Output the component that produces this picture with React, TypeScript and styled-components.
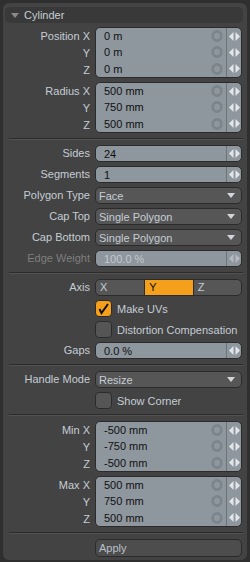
import styled, { createGlobalStyle } from 'styled-components'

const GlobalStyle = createGlobalStyle`
  html, body {
    margin: 0;
    padding: 0;
    background: #2f2f2f;
    overflow: hidden;
  }
  body {
    font-family: 'Liberation Sans', Arial, sans-serif;
    font-size: 11px;
  }
`

const Panel = styled.div`
  margin: 3px;
  background: #434343;
  border-radius: 6px;
  padding: 4px 5px 3px 0;
  display: flex;
  flex-direction: column;
  gap: 4px;
`

const Header = styled.div`
  height: 16px;
  margin: 0 -1px 0 2px;
  background: #393939;
  border-radius: 5px;
  display: flex;
  align-items: center;
  gap: 5px;
  padding-left: 6px;
  color: #c5cdd5;
`

const Row = styled.div`
  display: grid;
  grid-template-columns: 87px 1fr;
  column-gap: 5px;
  align-items: center;
  min-height: 17px;
`

const Label = styled.div<{ $disabled?: boolean }>`
  text-align: right;
  white-space: nowrap;
  line-height: 17px;
  color: ${({ $disabled }) => ($disabled ? '#7e7e7e' : '#c5cdd5')};
`

const LabelStack = styled.div`
  display: grid;
  grid-template-rows: repeat(3, 1fr);
  height: 51px;
  padding: 1px 0;
  box-sizing: border-box;
  align-items: center;
`

const ValueBox = styled.div<{ $rows: number }>`
  height: ${({ $rows }) => $rows * 17}px;
  box-sizing: border-box;
  border: 1px solid #2b2b2b;
  border-radius: 5px;
  background: #8e969e;
  overflow: hidden;
  display: flex;
  flex-direction: column;
`

const ValueRow = styled.div`
  flex: 1;
  display: flex;
  align-items: center;
`

const ValueText = styled.span<{ $disabled?: boolean }>`
  flex: 1;
  padding-left: 8px;
  white-space: nowrap;
  color: ${({ $disabled }) => ($disabled ? '#c3c8cd' : '#111111')};
`

const Ghost = styled.svg`
  margin-right: 3px;
  flex-shrink: 0;
`

const ArrowCell = styled.div`
  width: 14px;
  align-self: stretch;
  border-left: 1px solid #6c747b;
  display: flex;
  align-items: center;
  justify-content: center;
`

const Dropdown = styled.div`
  height: 17px;
  box-sizing: border-box;
  border: 1px solid #2b2b2b;
  border-radius: 5px;
  background: #565656;
  color: #c5cdd5;
  display: flex;
  align-items: center;
  justify-content: space-between;
  padding: 0 6px 0 3px;
`

const Segmented = styled.div`
  height: 17px;
  box-sizing: border-box;
  border: 1px solid #2b2b2b;
  border-radius: 5px;
  background: #565656;
  overflow: hidden;
  display: grid;
  grid-template-columns: repeat(3, 1fr);
`

const Segment = styled.div<{ $active?: boolean }>`
  padding-left: 4px;
  line-height: 15px;
  color: ${({ $active }) => ($active ? '#111111' : '#c5cdd5')};
  background: ${({ $active }) => ($active ? '#f5a01c' : 'transparent')};
  & + & {
    border-left: 1px solid #2b2b2b;
  }
`

const CheckWrap = styled.div`
  display: flex;
  align-items: center;
  gap: 5px;
  color: #c5cdd5;
  white-space: nowrap;
`

const Box = styled.div<{ $checked?: boolean }>`
  width: 17px;
  height: 17px;
  box-sizing: border-box;
  border: 1px solid #2b2b2b;
  border-radius: 4px;
  background: ${({ $checked }) => ($checked ? '#f5a01c' : '#555555')};
  display: flex;
  align-items: center;
  justify-content: center;
  flex-shrink: 0;
`

const Separator = styled.div`
  height: 4px;
  margin: 0 -1px 0 6px;
  display: flex;
  flex-direction: column;
  justify-content: center;
  &::before {
    content: '';
    height: 1px;
    background: #2c2c2c;
  }
  &::after {
    content: '';
    height: 1px;
    background: #525252;
  }
`

const Button = styled.div`
  height: 18px;
  box-sizing: border-box;
  border: 1px solid #2b2b2b;
  border-radius: 5px;
  background: #4d4d4d;
  color: #b9c1c9;
  padding-left: 3px;
  line-height: 16px;
`

function Arrows({ dim }: { dim?: boolean }) {
  const c = dim ? '#b5babf' : '#e2e6ea'
  return (
    <svg width="11" height="9" viewBox="0 0 11 9">
      <polygon points="0,4.5 4.5,0 4.5,9" fill={c} />
      <polygon points="6.5,0 11,4.5 6.5,9" fill={c} />
    </svg>
  )
}

function ResetIcon() {
  return (
    <Ghost width="12" height="12" viewBox="0 0 12 12">
      <ellipse cx="6" cy="6" rx="4.3" ry="4.6" fill="none" stroke="#7c848b" strokeWidth="2.6" />
    </Ghost>
  )
}

function Caret({ color = '#d2d6da' }: { color?: string }) {
  return (
    <svg width="8" height="5" viewBox="0 0 8 5">
      <polygon points="0,0 8,0 4,5" fill={color} />
    </svg>
  )
}

function Vector({ label, values }: { label: string; values: string[] }) {
  const names = [label, 'Y', 'Z']
  return (
    <Row>
      <LabelStack>
        {names.map((n) => (
          <Label key={n}>{n}</Label>
        ))}
      </LabelStack>
      <ValueBox $rows={3}>
        {values.map((v, i) => (
          <ValueRow key={i}>
            <ValueText>{v}</ValueText>
            <ResetIcon />
            <ArrowCell>
              <Arrows />
            </ArrowCell>
          </ValueRow>
        ))}
      </ValueBox>
    </Row>
  )
}

function NumberField({ label, value, disabled }: { label: string; value: string; disabled?: boolean }) {
  return (
    <Row>
      <Label $disabled={disabled}>{label}</Label>
      <ValueBox $rows={1}>
        <ValueRow>
          <ValueText $disabled={disabled}>{value}</ValueText>
          <ArrowCell>
            <Arrows dim={disabled} />
          </ArrowCell>
        </ValueRow>
      </ValueBox>
    </Row>
  )
}

function Select({ label, value }: { label: string; value: string }) {
  return (
    <Row>
      <Label>{label}</Label>
      <Dropdown>
        <span>{value}</span>
        <Caret />
      </Dropdown>
    </Row>
  )
}

function Check({ label, checked }: { label: string; checked?: boolean }) {
  return (
    <Row>
      <span />
      <CheckWrap>
        <Box $checked={checked}>
          {checked && (
            <svg width="13" height="13" viewBox="0 0 13 13">
              <path d="M2.5 7 L4.5 11 L11 2" fill="none" stroke="#111" strokeWidth="2" />
            </svg>
          )}
        </Box>
        {label}
      </CheckWrap>
    </Row>
  )
}

export default function App() {
  return (
    <>
      <GlobalStyle />
      <Panel>
        <Header>
          <Caret color="#8a8a8a" />
          Cylinder
        </Header>
        <Vector label="Position X" values={['0 m', '0 m', '0 m']} />
        <Vector label="Radius X" values={['500 mm', '750 mm', '500 mm']} />
        <Separator />
        <NumberField label="Sides" value="24" />
        <NumberField label="Segments" value="1" />
        <Select label="Polygon Type" value="Face" />
        <Select label="Cap Top" value="Single Polygon" />
        <Select label="Cap Bottom" value="Single Polygon" />
        <NumberField label="Edge Weight" value="100.0 %" disabled />
        <Separator />
        <Row>
          <Label>Axis</Label>
          <Segmented>
            <Segment>X</Segment>
            <Segment $active>Y</Segment>
            <Segment>Z</Segment>
          </Segmented>
        </Row>
        <Check label="Make UVs" checked />
        <Check label="Distortion Compensation" />
        <NumberField label="Gaps" value="0.0 %" />
        <Separator />
        <Select label="Handle Mode" value="Resize" />
        <Check label="Show Corner" />
        <Separator />
        <Vector label="Min X" values={['-500 mm', '-750 mm', '-500 mm']} />
        <Vector label="Max X" values={['500 mm', '750 mm', '500 mm']} />
        <Separator />
        <Row>
          <span />
          <Button>Apply</Button>
        </Row>
      </Panel>
    </>
  )
}
